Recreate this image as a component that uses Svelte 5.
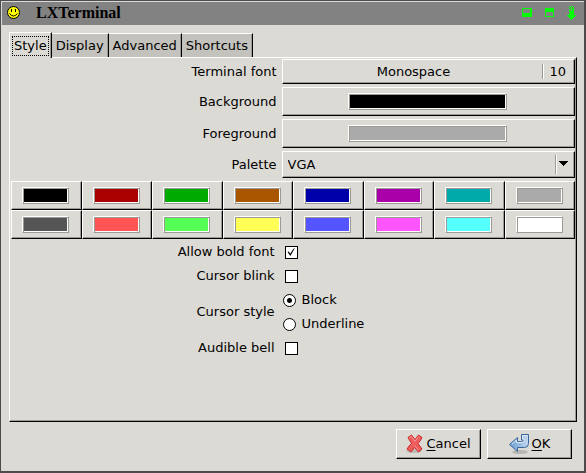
<script>
  const tabs = ['Style', 'Display', 'Advanced', 'Shortcuts'];
  const palette = [
    '#000000', '#aa0000', '#00aa00', '#aa5500', '#0000aa', '#aa00aa', '#00aaaa', '#aaaaaa',
    '#555555', '#ff5555', '#55ff55', '#ffff55', '#5555ff', '#ff55ff', '#55ffff', '#ffffff'
  ];
  let active = $state('Style');
  let scheme = $state('VGA');
  let bold = $state(true);
  let blink = $state(false);
  let bell = $state(false);
  let cursor = $state('block');
</script>

<div class="window">
  <header>
    <svg class="face" width="14" height="14" viewBox="0 0 14 14" aria-hidden="true">
      <circle cx="6.5" cy="6.5" r="6" fill="#ffff00" stroke="#000" />
      <path d="M4 3h1v3H4zM8 3h1v3H8z" fill="#000" shape-rendering="crispEdges" />
      <path d="M2.500 7.500Q6.500 12.500 10.500 7.500" fill="none" stroke="#000" />
    </svg>
    <h1>LXTerminal</h1>
    <div class="controls">
      <button type="button" aria-label="Minimize">
        <svg width="10" height="14" shape-rendering="crispEdges"><path d="M0 2h10v9H0zM1 3v4h7V3z" fill="#00ff00" fill-rule="evenodd" /></svg>
      </button>
      <button type="button" aria-label="Maximize">
        <svg width="9" height="14" shape-rendering="crispEdges"><path d="M0 2h9v9H0zM1 6v4h7V6z" fill="#00ff00" fill-rule="evenodd" /></svg>
      </button>
      <button type="button" aria-label="Close">
        <svg width="9" height="14" shape-rendering="crispEdges">
          <path d="M2 0h1v1H2zM4 0h1v1H4zM6 0h1v1H6zM3 1h1v1H3zM5 1h1v1H5zM2 2h2v1H2zM5 2h2v1H5zM3 3h1v1H3zM5 3h2v1H5zM2 4h2v1H2zM5 4h2v1H5zM2 5h5v1H2zM3 6h4v1H3zM2 7h5v2H2zM0 9h9v1H0zM1 10h7v1H1zM2 11h5v1H2zM3 12h3v1H3zM4 13h1v1H4z" fill="#00ff00" />
        </svg>
      </button>
    </div>
  </header>

  <main>
    <div class="tabs" role="tablist">
      {#each tabs as tab}
        <button type="button" role="tab" class="tab" class:active={active === tab} aria-selected={active === tab} onclick={() => (active = tab)}>
          <span>{tab}</span>
        </button>
      {/each}
    </div>

    <section class="panel" role="tabpanel">
      <div class="form">
        <label for="font">Terminal font</label>
        <button type="button" id="font" class="raised font">
          <span class="family">Monospace</span>
          <span class="size">10</span>
        </button>
        <label for="bg">Background</label>
        <button type="button" id="bg" class="raised color"><span class="swatch wide" style:background="#000000"></span></button>
        <label for="fg">Foreground</label>
        <button type="button" id="fg" class="raised color"><span class="swatch wide" style:background="#aaaaaa"></span></button>
        <label for="palette">Palette</label>
        <div class="combo">
          <select id="palette" class="raised" bind:value={scheme}>
            <option>VGA</option>
            <option>Tango</option>
            <option>xterm</option>
          </select>
          <svg width="16" height="19" aria-hidden="true" shape-rendering="crispEdges">
            <path d="M0 0h1v19H0z" fill="#9c9a94" /><path d="M1 0h1v19H1z" fill="#fff" />
            <path d="M4 6h9v1H4zM5 7h7v1H5zM6 8h5v1H6zM7 9h3v1H7zM8 10h1v1H8z" fill="#000" />
          </svg>
        </div>
      </div>

      <div class="palette">
        {#each palette as c}
          <button type="button" class="raised color" aria-label={c}><span class="swatch" style:background={c}></span></button>
        {/each}
      </div>

      <div class="options">
        <label for="bold">Allow bold font</label>
        <div class="choice"><input id="bold" type="checkbox" bind:checked={bold} /></div>
        <label for="blink">Cursor blink</label>
        <div class="choice"><input id="blink" type="checkbox" bind:checked={blink} /></div>
        <span id="cursor-style">Cursor style</span>
        <div role="radiogroup" aria-labelledby="cursor-style">
          <label class="choice radio"><input type="radio" value="block" bind:group={cursor} />Block</label>
          <label class="choice radio"><input type="radio" value="underline" bind:group={cursor} />Underline</label>
        </div>
        <label for="bell">Audible bell</label>
        <div class="choice"><input id="bell" type="checkbox" bind:checked={bell} /></div>
      </div>
    </section>

    <footer>
      <button type="button" class="raised action">
        <svg width="18" height="20" viewBox="0 0 18 20" aria-hidden="true">
          <ellipse cx="8" cy="17" rx="8" ry="2" fill="#000" opacity=".14" />
          <path d="M2 3.500L5.500 1L9 5.500L12.500 1L16 3.500Q14.500 7 12 9.500L16 15L12.500 18L8.500 13.500L5 18L1 15Q3 11.500 5.500 9.500Z" fill="#ee5c5c" stroke="#c92c2c" stroke-linejoin="round" />
          <path d="M3.500 4L5.300 2.500L9 7.200L12.700 2.500M8.500 11.500L12.500 16" fill="none" stroke="#f69a9a" />
        </svg>
        <span><u>C</u>ancel</span>
      </button>
      <button type="button" class="raised action">
        <svg width="21" height="20" viewBox="0 0 21 20" aria-hidden="true">
          <defs><linearGradient id="arrow" x1="0" x2="1"><stop offset="0" stop-color="#6b9bd0" /><stop offset="1" stop-color="#c3d9ef" /></linearGradient></defs>
          <ellipse cx="11" cy="18" rx="8" ry="2" fill="#000" opacity=".16" />
          <path d="M.500 10.500L8.500 3.500V7.500H12.500Q14.500 7.500 14.500 6H12.500V.500H19.500V9.500Q19.500 13.500 15.500 13.500H8.500V17.500Z" fill="url(#arrow)" stroke="#3b669d" stroke-linejoin="round" />
          <path d="M2.500 10.500L7.500 6V8.500H13Q15.500 8.500 15.500 5H13.500V1.500H18.500" fill="none" stroke="#dce9f6" />
        </svg>
        <span><u>O</u>K</span>
      </button>
    </footer>
  </main>
</div>

<style>
  :global(body) { background: #dcdad5; }
  .window {
    box-sizing: border-box;
    min-height: 100vh;
    display: flex;
    flex-direction: column;
    border: solid #4d4b4b;
    border-width: 1px 2px 2px 1px;
    background: #dcdad5;
    color: #000;
    font: 13px/16px "DejaVu Sans", sans-serif;
  }
  button, select { font: inherit; color: inherit; }
  button { margin: 0; }
  header {
    display: flex;
    align-items: center;
    height: 21px;
    padding: 0 8px 2px 5px;
    border-top: 1px solid #dcdad5;
    border-left: 1px solid #dcdad5;
    background: #828282;
  }
  h1 { flex: 1; margin: 0 0 0 15px; font: bold 16px/20px "Liberation Serif", serif; }
  .controls { display: flex; gap: 13px; }
  .controls button { padding: 0; border: 0; background: none; }
  svg { display: block; flex: none; }
  main { flex: 1; display: flex; flex-direction: column; padding: 7px 7px 12px 8px; }

  .tabs { display: flex; align-items: flex-end; }
  .tab {
    height: 24px;
    padding: 0 3px;
    border: solid;
    border-width: 1px 1px 0 0;
    border-color: #fff #000;
    box-shadow: inset -1px 0 #9c9a94;
    background: #c4c2bd;
  }
  .tab.active {
    height: 26px;
    padding: 0 3px;
    border-left: 1px solid #fff;
    margin-bottom: -1px;
    background: #dcdad5;
    z-index: 1;
  }
  .tab span { display: block; padding: 1px; line-height: 18px; }
  .tab.active span { outline: 1px dotted #000; padding: 0 1px; }

  .panel {
    flex: 1;
    padding: 1px;
    border: 1px solid;
    border-color: #fff #000 #000 #fff;
    box-shadow: inset -1px -1px #9c9a94;
  }
  .form, .options {
    display: grid;
    grid-template-columns: 265fr 294fr;
    align-items: center;
  }
  .form { gap: 3px 5px; margin-left: 1px; }
  .form > label, .options > label, .options > span { text-align: right; }
  .raised {
    box-sizing: border-box;
    border: 1px solid;
    border-color: #fff #000 #000 #fff;
    border-radius: 0;
    box-shadow: inset -1px -1px #9c9a94;
    background: #dcdad5;
  }
  .font { display: flex; align-items: center; height: 25px; padding: 0 8px 0 2px; }
  .family { flex: 1; }
  .size { border-left: 1px solid #9c9a94; box-shadow: inset 1px 0 #fff; padding-left: 6px; line-height: 15px; }
  .color { display: flex; align-items: center; justify-content: center; height: 29px; padding: 0 1px 1px 0; }
  .swatch {
    box-sizing: border-box;
    width: 47px;
    height: 17px;
    border: 1px solid;
    border-color: #fff #9c9a94 #9c9a94 #fff;
    box-shadow: inset 1px 1px #9c9a94, inset -1px -1px #fff;
  }
  .wide { width: 159px; }
  .combo { display: grid; align-items: center; }
  .combo > * { grid-area: 1 / 1; }
  .combo select { appearance: none; width: 100%; height: 27px; padding: 0 24px 0 5px; }
  .combo svg { justify-self: end; margin-right: 4px; pointer-events: none; }

  .palette { display: grid; grid-template-columns: repeat(8, 1fr); margin: 3px 0 1px; }

  .options { column-gap: 8px; }
  .choice { display: flex; align-items: center; height: 24px; padding-left: 2px; }
  .radio { gap: 6px; padding-left: 0; }
  input {
    appearance: none;
    box-sizing: border-box;
    width: 13px;
    height: 13px;
    margin: 0;
    border: 1px solid #000;
    background: #fff;
  }
  input[type='radio'] { border-radius: 50%; }
  input[type='radio']:checked { background: radial-gradient(circle, #000 2px, #fff 3px); }
  input[type='checkbox']:checked::before {
    content: '';
    display: block;
    width: 11px;
    height: 11px;
    background: #000;
    clip-path: polygon(18% 50%, 30% 46%, 42% 66%, 72% 20%, 84% 16%, 44% 86%);
  }

  footer { display: flex; justify-content: flex-end; gap: 6px; padding: 7px 5px 0 0; }
  .action { display: flex; align-items: center; justify-content: center; gap: 2px; width: 85px; height: 30px; padding: 0; }
  u { text-underline-offset: 2px; }
</style>
